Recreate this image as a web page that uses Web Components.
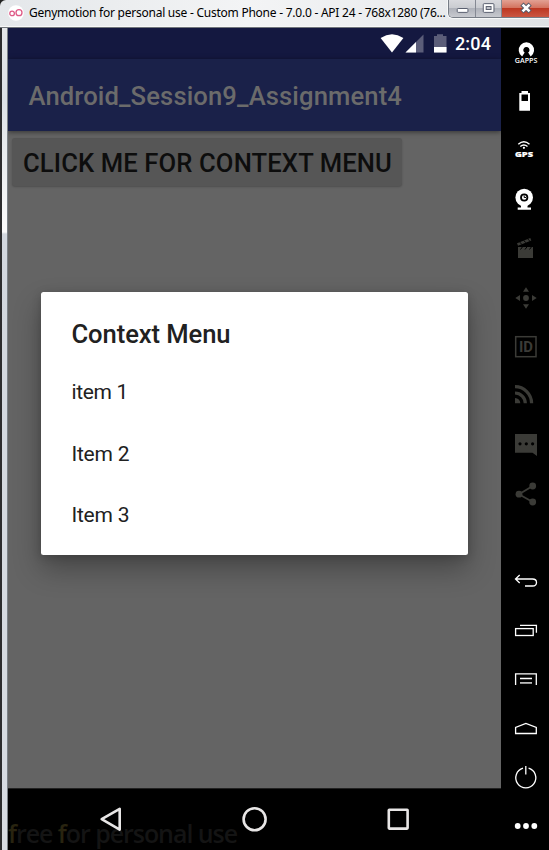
<!DOCTYPE html>
<html lang="en"><head><meta charset="utf-8"><title>Genymotion</title>
<style>html,body{margin:0;height:100%;overflow:hidden;background:#000}</style></head><body>
<emulator-window></emulator-window>
<script>
const define=(name,html,init)=>customElements.define(name,class extends HTMLElement{
  constructor(){super();this.attachShadow({mode:'open'}).innerHTML=html;}
  connectedCallback(){if(init)init.call(this,this.shadowRoot);}
});

// A single line of text, tracked so that it spans the given width.
define('fit-text','<style>:host{display:block;white-space:nowrap}span{display:inline-block}</style><span><slot></slot></span>',function(r){
  const s=r.querySelector('span'),w=+this.getAttribute('width'),n=+this.getAttribute('count')||this.textContent.length;
  s.style.letterSpacing=(w-s.getBoundingClientRect().width)/n+'px';
});

define('title-bar',`<style>
:host{display:flex;height:27px;box-sizing:border-box;background:linear-gradient(90deg,#e4e7ea,#f3f4f5 45%,#e9ebed 80%,#dfe2e5);border-bottom:1px solid #f8f8f8;border-radius:6px 0 0 0;padding-left:8px}
.logo{width:16px;height:26px}
fit-text{margin-left:5px;width:419px;font:12px/25px "Noto Sans",sans-serif;color:#000}
.controls{display:flex;height:17px;flex:1;border:1px solid #777d86;border-top:0;border-right:0;border-radius:0 0 0 5px;overflow:hidden;box-shadow:0 0 0 1px #f7f8f8}
.controls svg{display:block;height:17px}
.min,.max{background:linear-gradient(#d8d9dd,#c9cbd0 48%,#afb2ba 50%,#c7c9cf);border-right:1px solid #858993}
.close{background:linear-gradient(#e2a193,#d47460 45%,#bd3822 50%,#ca5642)}
</style>
<svg class="logo" viewBox="0 0 16 26"><circle cx="8" cy="13" r="7.8" fill="#fff"/><g fill="none" stroke="#df5b87" stroke-width="1.3"><circle cx="4.1" cy="13.4" r="2.3"/><circle cx="11" cy="12.7" r="3"/></g></svg>
<fit-text width="416.500">Genymotion for personal use - Custom Phone - 7.0.0 - API 24 - 768x1280 (76...</fit-text>
<div class="controls">
<svg class="min" width="27" viewBox="0 0 27 17"><rect x="8.5" y="8.5" width="11" height="4" rx="1" fill="#fff" stroke="#555b6b"/></svg>
<svg class="max" width="26" viewBox="0 0 26 17"><rect x="7.500" y="3.500" width="11" height="9" rx="1" fill="#fff" stroke="#555b6b"/><rect x="10.500" y="6.500" width="5" height="3" fill="#c4c6cc" stroke="#555b6b"/></svg>
<svg class="close" width="48" viewBox="0 0 48 17"><g transform="translate(1 0)"><path d="M19.500 4l8.500 8M28 4l-8.500 8" stroke="#555b6b" stroke-width="4.800"/><path d="M20.200 4.500l7.200 7M27.400 4.500l-7.200 7" stroke="#fff" stroke-width="2.700"/></g></svg>
</div>`);

define('status-bar',`<style>
:host{display:flex;height:31px;background:#141840;color:#fff;justify-content:flex-end}
svg{display:block}fit-text{width:46px;font:500 18px/32px Roboto,sans-serif}
</style>
<svg width="75" height="31" viewBox="380 28 75 31"><path d="M392 52.500L380.600 38q11.400-7.400 22.800 0z" fill="#fff"/><path d="M423.500 34.500V52.500H405.500z" fill="#5b5d79"/><path d="M416 42V52.500H405.500z" fill="#fff"/><path d="M437 34.300h6v1.800h3.500V52.500H434V36.100h3z" fill="#5b5d79"/><path d="M434 47h12.500v5.500H434z" fill="#fff"/></svg>
<fit-text width="36">2:04</fit-text>`);

define('app-bar',`<style>
:host{display:block;height:72px;background:#1a2149;padding-left:20.500px;box-shadow:0 1px 5px rgba(0,0,0,.5);position:relative;box-sizing:border-box}
fit-text{font:500 25.600px/74px Roboto,sans-serif;color:#6b6b6b}</style><fit-text width="373.500" count="28"><slot></slot></fit-text>`,null);

define('raised-button',`<style>
:host{display:block;width:390px;height:48px;margin:7px 0 0 4px;box-sizing:border-box;padding-left:11px;background:#565656;border-radius:3px;box-shadow:0 1px 2px rgba(0,0,0,.22)}
fit-text{font:500 25.600px/51px Roboto,sans-serif;color:#0d0d0d}</style><fit-text width="369">CLICK ME FOR CONTEXT MENU</fit-text>`);

define('context-menu',`<style>
:host{display:flex;flex-direction:column;box-sizing:border-box;width:426.600px;height:263px;padding:12px 30.500px 8px;background:#fff;border-radius:2.500px;box-shadow:0 14px 28px rgba(0,0,0,.3),0 2px 10px rgba(0,0,0,.18);color:#212121}
.h{font:500 25.600px/61px Roboto,sans-serif;height:58px}
.i{font:400 21px/61px Roboto,sans-serif;height:61.600px}</style>
<fit-text class="h" width="159">Context Menu</fit-text><fit-text class="i" width="56.500">item 1</fit-text><fit-text class="i" width="57.700">Item 2</fit-text><fit-text class="i" width="57.700">Item 3</fit-text>`);

define('nav-bar',`<style>
:host{display:grid;height:62px;background:#000;overflow:hidden}
svg,.w{grid-area:1/1}.w{font:600 25px/34px "Open Sans",sans-serif;color:#141414;margin-top:28px;align-self:start}
i{font-style:normal;color:#292410}</style>
<fit-text class="w" width="229">free for personal use</fit-text>
<svg width="493" height="62" viewBox="8 788 493 62" fill="none" stroke="#e8e6e6" stroke-width="2.600" stroke-linejoin="round"><path d="M8 788.500h493" stroke="#222" stroke-width="1"/><path d="M119.700 808.800v20.800L101.700 819.200z"/><circle cx="254.600" cy="819.200" r="11"/><rect x="388.800" y="809.800" width="18.800" height="18.800" rx=".5"/></svg>`,function(r){
  const t=r.querySelector('.w');t.innerHTML=t.textContent.replace(/f/g,'<i>f</i>');
});

define('phone-screen',`<style>
:host{display:flex;flex-direction:column;width:493px;height:822px;background:#646464;overflow:hidden}
main{flex:1;display:flex;flex-direction:column}context-menu{margin:106px 0 0 33px}
</style><status-bar></status-bar><app-bar>Android_Session9_Assignment4</app-bar><main><raised-button></raised-button><context-menu></context-menu></main><nav-bar></nav-bar>`);

// Toolbar glyphs, drawn in window coordinates; each cell shows its own slice.
const tools=[
'<path d="M523.400 54.500A5.400 5.400 0 1 1 529.400 54.500" fill="none" stroke="#fff" stroke-width="4.600"/><circle cx="526.400" cy="49.800" r="2.300" fill="#000"/><text x="514.800" y="62.600" textLength="22.500" lengthAdjust="spacingAndGlyphs" font-size="6.800" font-weight="600" font-family="Open Sans" fill="#fff">GAPPS</text>',
'<path fill="#fff" fill-rule="evenodd" d="M521.500 91h6.500v2h2v17.700h-10.700V93h2.200zM521.500 94.500v6.500h6.500v-6.500z"/>',
'<g fill="none" stroke="#fff" stroke-width="1.400"><path d="M518.300 144.300q5.600-5 11.200 0M520.300 146.500q3.600-3.200 7.200 0"/></g><circle cx="523.900" cy="147.800" r="1.100" fill="#fff"/><text x="515" y="157.300" textLength="18" lengthAdjust="spacingAndGlyphs" font-size="7.600" font-weight="800" font-family="Open Sans" fill="#fff" stroke="#fff" stroke-width=".2">GPS</text>',
'<circle cx="524.200" cy="197.500" r="8.800" fill="#fff"/><circle cx="524.200" cy="197.500" r="3.200" fill="#fff" stroke="#000" stroke-width="1.800"/><path d="M524.200 195.500v2h1.800" stroke="#000" fill="none"/><path d="M521 205h6.500v2.500h3.500v2.200h-13.300v-2.200h3.300z" fill="#fff"/>',
'<g fill="#3b3b37"><path d="M518 247h15v11h-15z"/><path d="M517 243.200L530.300 238.100l1 2.500L518 245.700z"/></g><path d="M519.500 242l2.300 2.200M523.500 240.300l2.300 2.200M527.500 238.800l2.300 2.200M520.500 249.500l2-2.700M525 249.500l2-2.700M529.500 249.500l2-2.700" stroke="#000" stroke-width="1"/>',
'<g fill="#3b3b37"><circle cx="526" cy="298" r="2.900"/><path d="M526 287.300l3 4.500h-6zM526 308.700l3-4.500h-6zM515.300 298l4.700-3v6zM536.700 298l-4.700-3v6z"/></g>',
'<rect x="515.700" y="336.700" width="20.300" height="20" fill="none" stroke="#3b3b37" stroke-width="1.500"/><text x="519" y="352.300" textLength="14" lengthAdjust="spacingAndGlyphs" font-size="14.500" font-family="Roboto" font-weight="700" fill="#3b3b37">ID</text>',
'<g fill="none" stroke="#3b3b37" stroke-width="3.200"><path d="M515 386.700a16.600 16.600 0 0 1 16.600 16.600M515 393a10.300 10.300 0 0 1 10.300 10.300"/></g><path d="M515 398a5.300 5.300 0 0 1 5.300 5.300H515z" fill="#3b3b37"/>',
'<path d="M515 434h22v22l-4.500-3.200H515z" fill="#3b3b37"/><g fill="#000"><circle cx="520" cy="443.800" r="1.600"/><circle cx="526.300" cy="443.800" r="1.600"/><circle cx="532.600" cy="443.800" r="1.600"/></g>',
'<path d="M532.700 486L519 494.200l13.700 7.800" fill="none" stroke="#3b3b37" stroke-width="1.800"/><g fill="#3b3b37"><circle cx="532.700" cy="486" r="3.400"/><circle cx="519" cy="494.200" r="3.400"/><circle cx="532.700" cy="502" r="3.400"/></g>'];
const line=s=>'<g fill="none" stroke="#fff" stroke-width="1.300">'+s+'</g>';
const keys=[
line('<path d="M519.700 575l-4.200 4 4.200 4M515.500 579h17q4 0 4 3.500t-4 3.500h-7.500"/>'),
line('<rect x="515.600" y="628.600" width="17.600" height="6.900"/><path d="M520 625.300h16.400v7.500"/>'),
line('<path d="M515.600 685v-11.200h20.700V685M520 678.500h12"/><path d="M520 682.900h12" stroke="#bbb" stroke-width="1.800"/>'),
line('<path d="M515.600 733.500v-6l10.300-4 10.400 4v6z"/>'),
line('<path d="M523 768.200a10 10 0 1 0 5.600 0M525.800 766v8.500"/>'),
'<g fill="#fff"><circle cx="517.700" cy="826" r="2.900"/><circle cx="526" cy="826" r="2.900"/><circle cx="534.300" cy="826" r="2.900"/></g>'];
const cells=(a,y)=>a.map((g,i)=>`<svg width="48" height="49" viewBox="501 ${y+49*i} 48 49" overflow="visible">${g}</svg>`).join('');
define('tool-bar',`<style>:host{display:flex;flex-direction:column;justify-content:space-between;width:48px;height:822px;background:#000}div{display:flex;flex-direction:column}svg{display:block}</style><div>${cells(tools,28)}</div><div>${cells(keys,556)}</div>`);

define('emulator-window',`<style>
:host{display:block;width:549px;height:850px;background:#222;overflow:hidden}
.frame{display:flex;height:822px;border-top:1px solid #70757b}
.edge{width:8px;box-sizing:border-box;border-left:2px solid #2c2c2e;border-right:1px solid #7b8187;background:linear-gradient(#e5e7e9,#dce1e6 70px,#fbfbfb 204px,#d2d7de 206px,#d8dce2)}
</style><title-bar></title-bar><div class="frame"><div class="edge"></div><phone-screen></phone-screen><tool-bar></tool-bar></div>`);
</script></body></html>
